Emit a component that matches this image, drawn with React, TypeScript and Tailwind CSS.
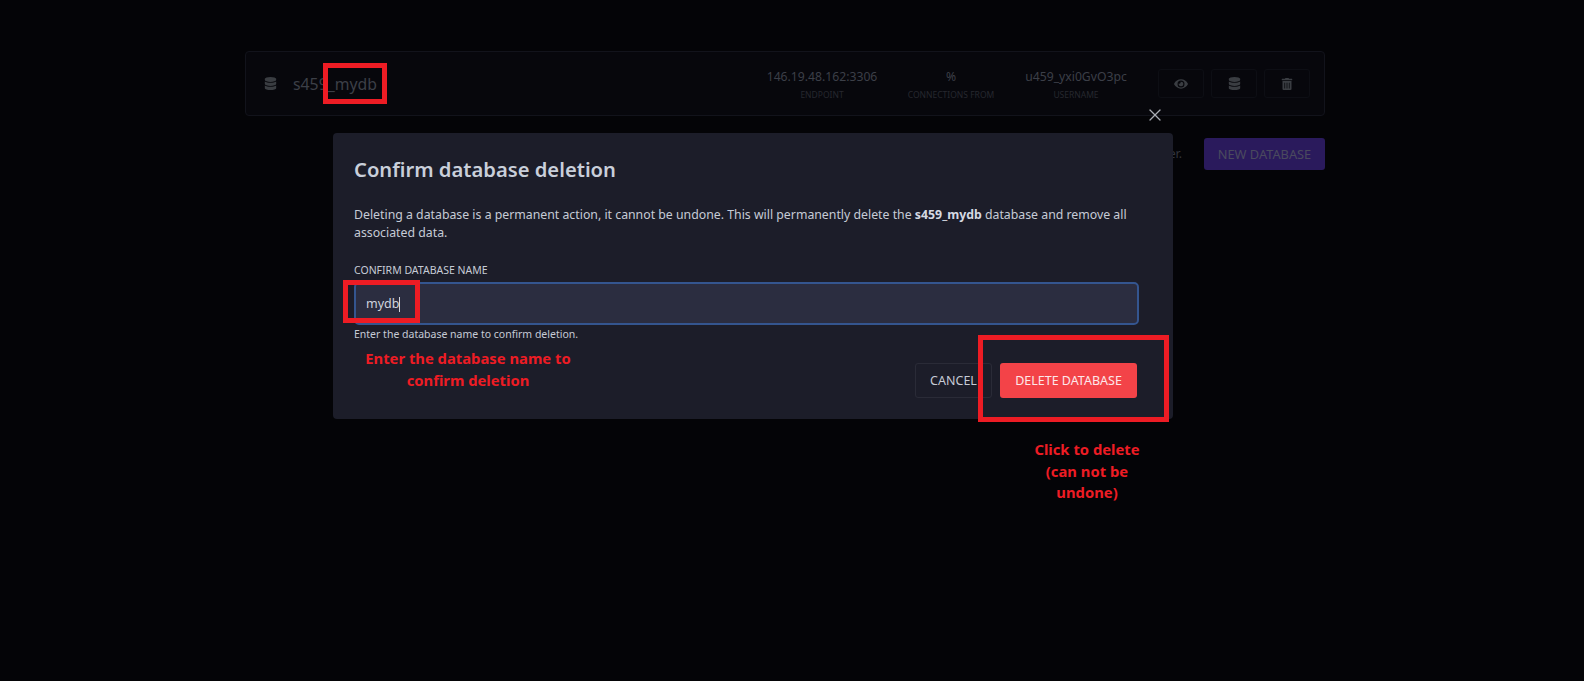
import { FaDatabase, FaEye, FaTrashAlt } from 'react-icons/fa';
import { X } from 'lucide-react';

const font = "font-['Noto_Sans','Open_Sans',sans-serif]";

function Stat({ value, label, width }: { value: string; label: string; width: string }) {
  return (
    <div className={`flex flex-col items-center ${width}`}>
      <span className="text-[12.2px] leading-[18px] text-[#3c3f48]">{value}</span>
      <span className="mt-[3px] text-[8.5px] leading-[12px] text-[#26282f]">{label}</span>
    </div>
  );
}

function IconButton({ children }: { children: React.ReactNode }) {
  return (
    <div className="flex h-[29px] w-[46px] items-center justify-center rounded-[3px] border border-[#0d0e14]">
      {children}
    </div>
  );
}

function DatabaseRow() {
  return (
    <div className="flex h-[65px] items-center rounded-[4px] border border-[#12131b] bg-[#07070c] pl-[18px] pr-[14px]">
      <FaDatabase size={13} className="text-[#3a3d42]" />
      <span className="ml-[16px] pt-[2px] text-[15.8px] text-[#3c3f47]">s459_mydb</span>
      <div className="ml-auto mr-[30px] flex translate-y-[1px] items-start gap-[27px]">
        <Stat value="146.19.48.162:3306" label="ENDPOINT" width="w-[112px]" />
        <Stat value="%" label="CONNECTIONS FROM" width="w-[92px]" />
        <Stat value="u459_yxi0GvO3pc" label="USERNAME" width="w-[104px]" />
      </div>
      <div className="flex gap-[7px]">
        <IconButton><FaEye size={14} className="text-[#3a3d42]" /></IconButton>
        <IconButton><FaDatabase size={13} className="text-[#3a3d42]" /></IconButton>
        <IconButton><FaTrashAlt size={12} className="text-[#3a3d42]" /></IconButton>
      </div>
    </div>
  );
}

function DeleteModal() {
  return (
    <div className="absolute left-[333px] top-[133px] flex h-[286px] w-[840px] flex-col rounded-[4px] bg-[#1c1d29] px-[21px] pt-[21px]">
      <h2 className="text-[20.2px] font-semibold leading-[30px] text-[#c9cfda]">Confirm database deletion</h2>
      <p className="mt-[22px] w-[790px] text-[12.3px] leading-[18px] text-[#c6cbd6]">
        Deleting a database is a permanent action, it cannot be undone. This will permanently delete the{' '}
        <b className="font-bold text-[#d5d9e2]">s459_mydb</b> database and remove all associated data.
      </p>
      <label className="mt-[20px] text-[10.5px] leading-[16px] text-[#c6cbd6]">CONFIRM DATABASE NAME</label>
      <div className="mt-[4px] flex h-[43px] w-[785px] items-center rounded-[5px] border-2 border-[#34558f] bg-[#2b2d40] pl-[10px] pt-[1px] text-[12.5px] text-[#d0d4de]">
        mydb<span className="h-[15px] w-px bg-[#d0d4de]" />
      </div>
      <span className="mt-[1px] text-[10.5px] leading-[16px] text-[#c6cbd6]">Enter the database name to confirm deletion.</span>
      <div className="mt-[21px] flex justify-end gap-[8px] pr-[15px]">
        <div className="flex h-[35px] w-[77px] items-center justify-center rounded-[3px] border border-[#2a2b37] pt-[2px] text-[12.5px] text-[#c6cbd6]">CANCEL</div>
        <div className="flex h-[35px] w-[137px] items-center justify-center rounded-[3px] bg-[#f34348] pt-[2px] text-[12.5px] text-[#fde8ea]">DELETE DATABASE</div>
      </div>
    </div>
  );
}

export default function App() {
  return (
    <div className={`relative h-[681px] w-[1584px] overflow-hidden bg-[#040407] ${font}`}>
      <div className="pl-[245px] pr-[259px] pt-[51px]">
        <DatabaseRow />
        <div className="mt-[22px] flex items-center justify-end">
          <span className="mr-[22px] text-[12.3px] text-[#33353d]">er.</span>
          <div className="flex h-[32px] w-[121px] items-center justify-center rounded-[3px] bg-[#2a1a5c] pt-[1px] text-[12.8px] text-[#4a4a5e]">NEW DATABASE</div>
        </div>
      </div>

      <X size={20} strokeWidth={1.5} className="absolute left-[1145px] top-[105px] text-[#a9acb3]" />
      <DeleteModal />

      {/* red annotations pasted over the screenshot */}
      <div className="absolute left-[323px] top-[63px] h-[41px] w-[64px] border-[5px] border-[#ed1c24]" />
      <div className="absolute left-[343px] top-[280px] h-[43px] w-[77px] border-[5px] border-[#ed1c24]" />
      <div className="absolute left-[978px] top-[335px] h-[87px] w-[191px] border-[5px] border-[#ed1c24]" />
      <div className="absolute left-[338px] top-[348px] w-[260px] text-center text-[14.8px] font-bold leading-[21.5px] text-[#ed1c24]">
        Enter the database name to<br />confirm deletion
      </div>
      <div className="absolute left-[1007px] top-[439px] w-[160px] text-center text-[14.8px] font-bold leading-[21.5px] text-[#ed1c24]">
        Click to delete<br />(can not be<br />undone)
      </div>
    </div>
  );
}
